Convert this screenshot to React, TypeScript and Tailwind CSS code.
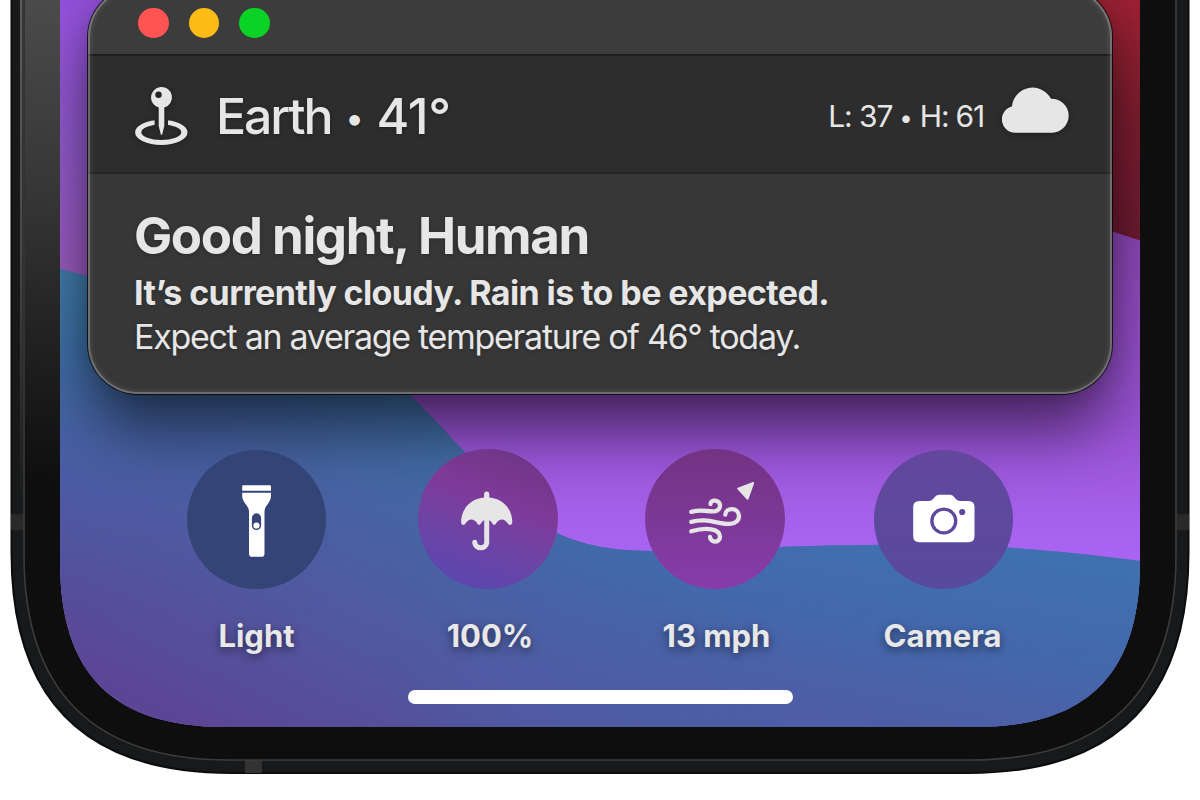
import type { ReactNode } from "react";

function PhoneBackdrop() {
  return (
    <svg className="absolute inset-0" width="1200" height="800" viewBox="0 0 1200 800" fill="none" aria-hidden="true">
      <defs>
        <linearGradient id="glare" gradientUnits="userSpaceOnUse" x1="60" y1="0" x2="10" y2="480">
          <stop offset="0" stopColor="#4b4b4b" />
          <stop offset="0.4" stopColor="#363636" />
          <stop offset="0.75" stopColor="#1e1e1e" />
          <stop offset="1" stopColor="#0e0e0e" />
        </linearGradient>
        <linearGradient id="railShine" gradientUnits="userSpaceOnUse" x1="0" y1="0" x2="0" y2="500">
          <stop offset="0" stopColor="#5c5c5c" />
          <stop offset="0.5" stopColor="#484848" />
          <stop offset="1" stopColor="#1b1c1d" />
        </linearGradient>
        <linearGradient id="blue" gradientUnits="userSpaceOnUse" x1="560" y1="390" x2="360" y2="810">
          <stop offset="0" stopColor="#3c76a8" />
          <stop offset="0.3" stopColor="#4367a3" />
          <stop offset="0.62" stopColor="#505aa1" />
          <stop offset="1" stopColor="#5b4594" />
        </linearGradient>
        <linearGradient id="blueRight" gradientUnits="userSpaceOnUse" x1="1000" y1="550" x2="965" y2="740">
          <stop offset="0" stopColor="#4070af" />
          <stop offset="0.4" stopColor="#426aad" />
          <stop offset="1" stopColor="#4e5da5" />
        </linearGradient>
        <linearGradient id="sweep" gradientUnits="userSpaceOnUse" x1="380" y1="0" x2="780" y2="0">
          <stop offset="0" stopColor="#000" />
          <stop offset="1" stopColor="#fff" />
        </linearGradient>
        <mask id="fadeRight" maskUnits="userSpaceOnUse" x="0" y="0" width="1200" height="800">
          <rect width="1200" height="800" fill="url(#sweep)" />
        </mask>
        <linearGradient id="blueLeft" gradientUnits="userSpaceOnUse" x1="60" y1="270" x2="60" y2="620">
          <stop offset="0" stopColor="#3f79a6" />
          <stop offset="0.2" stopColor="#3d6fa4" />
          <stop offset="0.45" stopColor="#4562a3" stopOpacity="0.9" />
          <stop offset="1" stopColor="#5351a0" stopOpacity="0" />
        </linearGradient>
        <linearGradient id="sweepLeft" gradientUnits="userSpaceOnUse" x1="100" y1="0" x2="330" y2="0">
          <stop offset="0" stopColor="#fff" />
          <stop offset="1" stopColor="#000" />
        </linearGradient>
        <mask id="fadeLeft" maskUnits="userSpaceOnUse" x="0" y="0" width="1200" height="800">
          <rect width="1200" height="800" fill="url(#sweepLeft)" />
        </mask>
        <linearGradient id="purpleLeft" gradientUnits="userSpaceOnUse" x1="60" y1="0" x2="60" y2="280">
          <stop offset="0" stopColor="#9350da" />
          <stop offset="0.5" stopColor="#8f59ca" />
          <stop offset="1" stopColor="#9859bb" />
        </linearGradient>
        <linearGradient id="purple" gradientUnits="userSpaceOnUse" x1="700" y1="230" x2="700" y2="560">
          <stop offset="0" stopColor="#8a46b4" />
          <stop offset="0.6" stopColor="#9852d3" />
          <stop offset="0.92" stopColor="#a763ee" />
          <stop offset="1" stopColor="#a964f2" />
        </linearGradient>
        <linearGradient id="red" gradientUnits="userSpaceOnUse" x1="1140" y1="0" x2="1140" y2="238">
          <stop offset="0" stopColor="#9a2032" />
          <stop offset="0.5" stopColor="#7c1d2f" />
          <stop offset="1" stopColor="#6b1a31" />
        </linearGradient>
        <clipPath id="screen">
          <path d="M60 -10V562C60 674 113 727 225 727H975C1087 727 1140 674 1140 562V-10Z" />
        </clipPath>
      </defs>
      <path d="M11.5 -10V553C11.500 699.700 84.800 773 231.500 773H968.5C1115.200 773 1188.500 699.700 1188.500 553V-10Z" fill="#17191a" stroke="#0a0c0d" strokeWidth="2" />
      <rect x="11" y="514" width="13" height="16" fill="#292929" />
      <rect x="1176" y="514" width="13" height="16" fill="#292929" />
      <rect x="245" y="760" width="17" height="13" fill="#333" />
      <path d="M24 -10V555C24 691 93 760 229 760H971C1107 760 1176 691 1176 555V-10Z" fill="#0e0e0e" stroke="#3c3c3c" strokeWidth="1.6" />
      <path d="M25 0H60V480H25Z" fill="url(#glare)" />
      <path d="M20 0H22.5V500H20Z" fill="url(#railShine)" />
      <g clipPath="url(#screen)">
        <rect width="1200" height="800" fill="url(#purple)" />
        <rect width="300" height="300" fill="url(#purpleLeft)" />
        <path d="M1000 0H1200V259Q1160 247 1114 232L1000 190Z" fill="url(#red)" />
        <path d="M0 254L60 269L87 276C190 305 330 330 410 395C440 424 455 442 465 452C500 495 530 522 557 533C600 553 645 552 700 550C770 547 850 544 940 545C1010 546 1080 552 1200 569V800H0Z" fill="url(#blue)" />
        <path d="M380 560C440 500 500 500 557 533C600 553 645 552 700 550C770 547 850 544 940 545C1010 546 1080 552 1200 569V800H380Z" fill="url(#blueRight)" mask="url(#fadeRight)" />
        <path d="M0 254L60 269L87 276C190 305 330 330 410 395V620H0Z" fill="url(#blueLeft)" mask="url(#fadeLeft)" />
      </g>
    </svg>
  );
}

function PinIcon() {
  return (
    <svg width="54" height="60" viewBox="134 86 54 60" className="drop-shadow-[0_1px_3px_rgba(0,0,0,0.35)]">
      <mask id="pinGap" maskUnits="userSpaceOnUse" x="130" y="80" width="62" height="70">
        <rect x="130" y="80" width="62" height="70" fill="#fff" />
        <rect x="154.6" y="110" width="13.4" height="17" fill="#000" />
      </mask>
      <g fill="#e6e6e6" fillRule="evenodd">
        <path mask="url(#pinGap)" d="M135.1 132.4a26.2 12.5 0 1 0 52.4 0a26.2 12.5 0 1 0 -52.4 0ZM141.3 132.2a20 7.7 0 1 0 40 0a20 7.7 0 1 0 -40 0Z" />
        <path d="M151 97.5a10.5 10.5 0 1 1 13.3 10.1V126L162.3 134Q161.5 136 160.7 134L158.7 126V107.6A10.5 10.5 0 0 1 151 97.5ZM155.3 94.7a3.2 3.2 0 1 0 6.4 0a3.2 3.2 0 1 0 -6.4 0Z" />
      </g>
    </svg>
  );
}

function CloudIcon() {
  return (
    <svg width="68" height="46" viewBox="1002 87 68 46" className="drop-shadow-[0_1px_3px_rgba(0,0,0,0.35)]">
      <path fill="#e6e6e6" d="M1015.3 132.7A13.3 13.3 0 0 1 1011.9 106.5A20.8 20.8 0 0 1 1051 98.7A17 17 0 0 1 1052.3 132.7Z" />
    </svg>
  );
}

function FlashlightIcon() {
  return (
    <svg width="30" height="74" viewBox="242 484 30 74">
      <path
        fill="#fff"
        fillRule="evenodd"
        d="M243.3 485.3H269.7Q271 485.3 271 486.6V490.7H242.2V486.6Q242.2 485.3 243.3 485.3ZM242.2 492.7H271V495.5C271 503 264.5 505.5 264.5 511.5V553.7Q264.5 556.8 261.4 556.8H252Q249 556.8 249 553.7V511.5C249 505.5 242.2 503 242.2 495.5ZM256.5 513.3A4.6 4.6 0 0 0 251.9 517.9V525.4A4.6 4.6 0 0 0 261.1 525.4V517.9A4.6 4.6 0 0 0 256.5 513.3Z"
      />
      <circle cx="256.5" cy="525.5" r="3.1" fill="#fff" />
    </svg>
  );
}

function UmbrellaIcon() {
  return (
    <svg width="52" height="62" viewBox="461 491 52 62">
      <path
        fill="#e6e6e6"
        d="M486.7 491.6Q489.2 491.6 489.3 494V497.6C502 498.5 512.3 508.5 512.3 522.2Q512.2 525.3 509.7 524.9Q508.8 524.7 507.8 523.5C504.5 518.2 499.3 518.2 496.2 523.2Q494.3 526.5 492.4 523.5Q491.2 521.3 489.3 520.3H484Q482.2 521.3 480.9 523.5Q479 526.5 477.1 523.2C474 518.2 468.8 518.2 465.5 523.5Q464.5 524.7 463.6 524.9Q461.1 525.3 461.1 522.2C461.1 508.5 471.4 498.5 484.1 497.6V494Q484.2 491.6 486.7 491.6Z"
      />
      <path d="M486.7 517V543.2A6 5.3 0 0 1 474.8 543.2V542.2" fill="none" stroke="#e6e6e6" strokeWidth="5" strokeLinecap="round" />
    </svg>
  );
}

function WindIcon() {
  return (
    <svg width="70" height="64" viewBox="687 481 70 64">
      <g fill="none" stroke="#e6e6e6" strokeWidth="4.3" strokeLinecap="round">
        <path d="M691.3 511.9C701 509 708 511.8 714.5 511.3C718.5 510.7 720.2 508 720 505.2C719.5 499.5 710.8 499 710.5 504" />
        <path d="M691.3 521.9C708 517.3 716 524.3 730 523.9C736 523.6 739.2 519.8 739 516C738.5 506.8 725.5 507.5 725.3 514.7" />
        <path d="M691.3 531.3C700 528.7 706 528.3 711.5 529.4C717 530.5 720 533.2 720 537C719.5 543.5 710.5 542.8 710 537" />
      </g>
      <path d="M738.2 488.6L753.2 483L747.6 498.7Z" fill="#e6e6e6" stroke="#e6e6e6" strokeWidth="2" strokeLinejoin="round" />
    </svg>
  );
}

function CameraIcon() {
  return (
    <svg width="62" height="49" viewBox="912.5 493 62 49">
      <path
        fill="#fff"
        fillRule="evenodd"
        d="M919 500H928.5Q931 500 932.6 498L935 495.2Q936.3 493.7 938.5 493.7H949.5Q951.7 493.7 953 495.2L955.3 498Q957 500 959.5 500H968Q974 500 974 506V535Q974 541.2 968 541.2H919Q912.7 541.2 912.7 535V506Q912.7 500 919 500ZM929.7 520a13.6 13.6 0 1 0 27.2 0a13.6 13.6 0 1 0 -27.2 0ZM958.6 511a3.1 3.1 0 1 0 6.2 0a3.1 3.1 0 1 0 -6.2 0Z"
      />
      <circle cx="943.3" cy="520" r="10.3" fill="#fff" />
    </svg>
  );
}

type ShortcutProps = {
  label: string;
  width: string;
  circle: string;
  icon: string;
  text: string;
  children: ReactNode;
};

function Shortcut({ label, width, circle, icon, text, children }: ShortcutProps) {
  return (
    <div className={`flex flex-col items-center ${width}`}>
      <div className={`flex items-center justify-center rounded-full ${circle}`}>
        <div className={icon}>{children}</div>
      </div>
      <span className={`mt-[28px] whitespace-nowrap text-[31px] leading-[38px] font-bold text-[#e8e8e8] [text-shadow:0_3px_8px_rgba(0,0,0,0.5)] ${text}`}>{label}</span>
    </div>
  );
}

export default function App() {
  return (
    <main className="relative h-[800px] w-[1200px] overflow-hidden bg-white font-['Inter',sans-serif]">
      <PhoneBackdrop />
      <div className="relative flex h-[800px] flex-col overflow-hidden">
        <div className="relative ml-[60px] flex h-[727px] w-[1080px] flex-col overflow-hidden">
          <section className="relative -mt-[13px] ml-[28px] flex h-[407px] w-[1024px] shrink-0 flex-col rounded-[50px] bg-[#373737] text-[#e6e6e6] shadow-[0_0_0_1px_rgba(0,0,0,0.75),0_0_26px_rgba(0,0,0,0.18),0_40px_60px_-4px_rgba(0,0,0,0.52)]">
            <div className="flex h-[67px] items-center gap-[20px] rounded-t-[50px] bg-[#3c3c3d] pt-[5px] pl-[50px]">
              <span className="size-[30.5px] rounded-full bg-[#ff5452]" />
              <span className="size-[30.5px] rounded-full bg-[#fcbc13]" />
              <span className="size-[30.5px] rounded-full bg-[#0bd325]" />
            </div>
            <header className="flex h-[120px] items-center border-t-2 border-b-2 border-t-[#1d1f1f] border-b-[#232424] bg-[#2d2d2d] pt-[4px] pl-[46px]">
              <PinIcon />
              <h2 className="ml-[28px] flex items-center text-[50px] leading-[60px] font-[450] whitespace-nowrap [text-shadow:0_1px_4px_rgba(0,0,0,0.3)]">
                <span className="tracking-[-2.1px]">Earth</span>
                <span className="ml-[14px] pt-[3px] text-[34px]">•</span>
                <span className="ml-[13px] tracking-[-0.3px]">41°</span>
              </h2>
              <p className="mr-[18px] ml-auto flex items-center text-[30px] leading-[36px] whitespace-nowrap">
                <span className="tracking-[-1.1px]">L: 37</span>
                <span className="ml-[7px] pt-[3px] text-[24px]">•</span>
                <span className="ml-[7px] tracking-[-1.2px]">H: 61</span>
              </p>
              <div className="-mt-[13px] mr-[42px]">
                <CloudIcon />
              </div>
            </header>
            <div className="flex flex-col pt-[32px] pl-[46px] [text-shadow:0_1px_4px_rgba(0,0,0,0.25)]">
              <h1 className="text-[51px] leading-[60px] font-bold tracking-[-1.4px]">Good night, Human</h1>
              <p className="mt-[5px] text-[34px] leading-[44px] font-bold tracking-[-0.6px]">It’s currently cloudy. Rain is to be expected.</p>
              <p className="text-[34px] leading-[44px] font-[420] tracking-[-1.3px]">Expect an average temperature of 46° today.</p>
            </div>
            <div className="pointer-events-none absolute inset-0 rounded-[50px] shadow-[inset_0_0_0_2px_rgba(255,255,255,0.2),inset_0_0_6px_1px_rgba(255,255,255,0.2)]" />
          </section>
          <nav className="relative mt-[55px] flex shrink-0 pl-[127px]">
            <Shortcut label="Light" width="w-[139px]" circle="mt-px size-[139px] bg-[#354476]" icon="pt-[3px]" text="">
              <FlashlightIcon />
            </Shortcut>
            <Shortcut label="100%" width="ml-[92px] w-[140px]" circle="size-[140px] bg-[linear-gradient(20deg,#5847b0_5%,#6f43a4_40%,#7f3a99_62%,#6a3482_98%)]" icon="pt-[5px] pr-[3px]" text="ml-[4px]">
              <UmbrellaIcon />
            </Shortcut>
            <Shortcut label="13 mph" width="ml-[87px] w-[140px]" circle="size-[140px] bg-linear-to-b from-[#733382] to-[#873cac]" icon="pb-[13px] pl-[14px]" text="ml-[3px]">
              <WindIcon />
            </Shortcut>
            <Shortcut label="Camera" width="ml-[89px] w-[139px]" circle="mt-px size-[139px] bg-linear-to-b from-[#63479c] to-[#584a9e]" icon="pb-[3px]" text="mr-[2px]">
              <CameraIcon />
            </Shortcut>
          </nav>
          <div className="mt-[35px] ml-[348px] h-[14px] w-[385px] shrink-0 rounded-full bg-white" />
        </div>
      </div>
    </main>
  );
}
